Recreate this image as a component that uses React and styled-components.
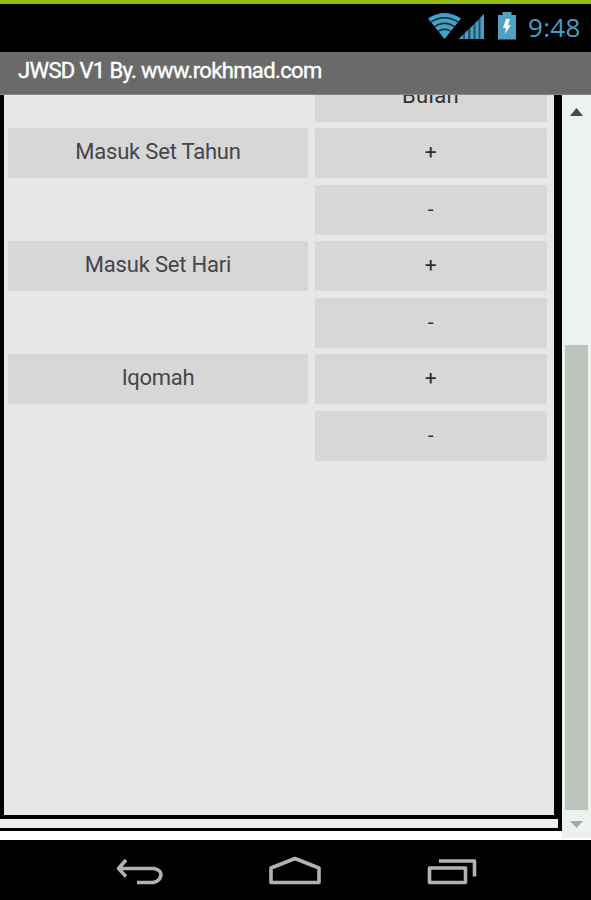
import React from "react";
import styled, { createGlobalStyle } from "styled-components";

const GlobalStyle = createGlobalStyle`
  * { box-sizing: border-box; }
  html, body { margin: 0; padding: 0; background: #000; }
  body { overflow: hidden; }
`;

const Screen = styled.div`
  width: 591px;
  height: 900px;
  display: flex;
  flex-direction: column;
  overflow: hidden;
  background: #fff;
  font-family: Roboto, "Liberation Sans", sans-serif;
`;

const StatusBar = styled.header`
  flex: 0 0 52px;
  display: flex;
  justify-content: flex-end;
  align-items: flex-start;
  border-top: 4px solid #93bc1c;
  background: #000;
  color: #489fc6;
`;

const StatusIcons = styled.svg`
  width: 92px;
  height: 40px;
  flex: none;
`;

const Clock = styled.time`
  width: 54px;
  margin: 5px 9px 0 8px;
  font: 400 26px/36px "Open Sans", "Noto Sans", sans-serif;
  letter-spacing: ${(p) => p.$tracking};
  white-space: nowrap;
`;

const TitleBar = styled.h1`
  flex: 0 0 43px;
  margin: 0;
  padding: 1px 0 5px 18px;
  border-bottom: 1px solid #858585;
  background: #6b6a6b;
  color: #fff;
  font-size: 22px;
  font-weight: 400;
  line-height: 36px;
  letter-spacing: ${(p) => p.$tracking};
  -webkit-text-stroke: 0.4px #fff;
  white-space: nowrap;
`;

const Viewport = styled.main`
  flex: 0 0 745px;
  display: flex;
  align-items: flex-start;
  overflow: hidden;
`;

const OuterFrame = styled.div`
  width: 562px;
  height: 736px;
  padding-bottom: 9px;
  border-right: 4px solid #000;
  border-bottom: 3px solid #000;
  background: #efefef;
`;

const InnerFrame = styled.div`
  height: 724px;
  overflow: hidden;
  border: solid #000;
  border-width: 0 4px 4px;
  background: #e7e7e7;
`;

const ControlGrid = styled.div`
  display: grid;
  grid-template-columns: 300px 232px;
  grid-auto-rows: 50px;
  gap: 6.5px;
  margin: -23.5px 0 0 4px;
`;

const ControlButton = styled.button`
  grid-column: ${(p) => p.$column};
  grid-row: ${(p) => p.$row};
  margin: 0;
  padding: 0 0 2px;
  border: 0;
  border-radius: 2px;
  background: #d7d7d7;
  box-shadow: 0 0 1px #d9d9d9;
  color: ${(p) => (p.$column === 1 ? "#45454a" : "#303030")};
  font-family: inherit;
  font-size: ${(p) => (p.$symbol ? "21px" : "22px")};
  line-height: 28px;
  letter-spacing: ${(p) => p.$tracking ?? "-0.2px"};
`;

const ScrollBar = styled.aside`
  width: 29px;
  height: 743px;
  display: flex;
  flex-direction: column;
  background: #eef2ef;
`;

const ArrowCell = styled.svg`
  width: 29px;
  height: ${(p) => p.$height}px;
  flex: none;
  fill: ${(p) => p.$color};
`;

const Thumb = styled.div`
  width: 23px;
  height: 465px;
  margin: 216px 0 0 3px;
  background: #bcc4bd;
`;

const NavigationBar = styled.nav`
  flex: 0 0 60px;
  background: #000;
`;

const NavIcons = styled.svg`
  display: block;
  width: 591px;
  height: 60px;
  fill: none;
  stroke: #b2b2b2;
  stroke-width: 3.6;
  stroke-linejoin: round;
  stroke-linecap: butt;
`;

const controls = [
  { label: "Bulan", column: 2, row: 1, tracking: "0.35px" },
  { label: "Masuk Set Tahun", column: 1, row: 2 },
  { label: "+", column: 2, row: 2 },
  { label: "-", column: 2, row: 3 },
  { label: "Masuk Set Hari", column: 1, row: 4 },
  { label: "+", column: 2, row: 4 },
  { label: "-", column: 2, row: 5 },
  { label: "Iqomah", column: 1, row: 6, tracking: "-0.3px" },
  { label: "+", column: 2, row: 6 },
  { label: "-", column: 2, row: 7 },
];

export default function App() {
  return (
    <>
      <GlobalStyle />
      <Screen>
        <StatusBar>
          <StatusIcons viewBox="428 4 92 40" aria-hidden="true">
            <path d="M428 18.5Q444.500 7.500 461 18.500L444.500 39Z" fill="#489fc6" />
            <g fill="none" stroke="#10242e" strokeWidth="1.3">
              <path d="M430 22.500Q444.500 13 459 22.500M434 27Q444.500 19.500 455 27M438 31.500Q444.500 27 451 31.500" />
            </g>
            <path d="M458.500 39L484 14V39Z" fill="#245064" />
            <path d="M459 39L463 35V39ZM465 39V33L468 30V39ZM470.500 39V28L473.500 25V39ZM475.500 39V23L478.500 20V39ZM480.500 39V17.500L484 14V39Z" fill="#489fc6" />
            <path d="M498 15H502.500V12H511.500V15H516V39.500H498Z" fill="#54a0c0" />
            <path d="M506 19L503 28H506L505 34L511 25H508L510 19Z" fill="#f4ffff" />
          </StatusIcons>
          <Clock $tracking="0.3px">9:48</Clock>
        </StatusBar>
        <TitleBar $tracking="-0.63px">JWSD V1 By. www.rokhmad.com</TitleBar>
        <Viewport>
          <OuterFrame>
            <InnerFrame>
              <ControlGrid>
                {controls.map(({ label, column, row, tracking }) => (
                  <ControlButton
                    key={`${column}-${row}`}
                    type="button"
                    $column={column}
                    $row={row}
                    $symbol={label.length === 1}
                    $tracking={tracking}
                  >
                    {label}
                  </ControlButton>
                ))}
              </ControlGrid>
            </InnerFrame>
          </OuterFrame>
          <ScrollBar>
            <ArrowCell $height={34} $color="#414a43" viewBox="0 0 29 34">
              <path d="M8 21L14.500 13L21 21Z" />
            </ArrowCell>
            <Thumb />
            <ArrowCell $height={28} $color="#a5a9a6" viewBox="0 0 29 28">
              <path d="M8 11H21L14.500 18Z" />
            </ArrowCell>
          </ScrollBar>
        </Viewport>
        <NavigationBar>
          <NavIcons viewBox="0 840 591 60" aria-label="Back, home and recent apps">
            <path d="M126 860L118.500 868.500L126 876.500M118.500 868.500H154Q161 870 161 875Q160 881.500 153 882.500H137" />
            <path d="M271 882.500V868L295 858.500L319 868V882.500Z" />
            <path d="M429.500 868H465.500V882.500H429.500ZM439 861H474.500V876.500" />
          </NavIcons>
        </NavigationBar>
      </Screen>
    </>
  );
}
